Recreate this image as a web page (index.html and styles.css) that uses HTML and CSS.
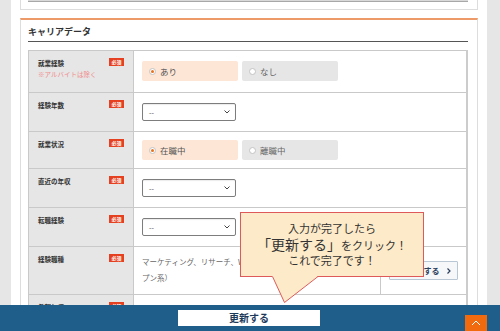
FILE: index.html
```
<!DOCTYPE html>
<html lang="ja">

<head>
    <meta charset="UTF-8">
    <title>キャリアデータ</title>
    <link rel="stylesheet" href="styles.css">
</head>

<body>
    <div class="page">
        <div class="card card-prev">
            <div class="prev-end"></div>
        </div>

        <section class="card card-career">
            <h2 class="card-title">キャリアデータ</h2>
            <table class="form-table">
                <colgroup>
                    <col class="col-label">
                    <col class="col-main">
                    <col class="col-side">
                </colgroup>
                <tr>
                    <th>
                        <div class="label">
                            <div>
                                <span class="label-text">就業経験</span>
                                <span class="note">※アルバイトは除く</span>
                            </div>
                            <span class="req">必須</span>
                        </div>
                    </th>
                    <td colspan="2" class="cell-radio cell-tall">
                        <div class="radios">
                            <label class="radio is-checked"><span class="dot"></span>あり</label>
                            <label class="radio"><span class="dot"></span>なし</label>
                        </div>
                    </td>
                </tr>
                <tr>
                    <th>
                        <div class="label"><span class="label-text">経験年数</span><span class="req">必須</span></div>
                    </th>
                    <td colspan="2">
                        <div class="select"><span>--</span><svg width="6" height="4" viewBox="0 0 6 4"><polyline points="0.5,0.5 3,3 5.5,0.5" fill="none" stroke="#444" stroke-width="1"/></svg></div>
                    </td>
                </tr>
                <tr>
                    <th>
                        <div class="label"><span class="label-text">就業状況</span><span class="req">必須</span></div>
                    </th>
                    <td colspan="2" class="cell-radio">
                        <div class="radios">
                            <label class="radio is-checked"><span class="dot"></span>在職中</label>
                            <label class="radio"><span class="dot"></span>離職中</label>
                        </div>
                    </td>
                </tr>
                <tr>
                    <th>
                        <div class="label"><span class="label-text">直近の年収</span><span class="req">必須</span></div>
                    </th>
                    <td colspan="2">
                        <div class="select"><span>--</span><svg width="6" height="4" viewBox="0 0 6 4"><polyline points="0.5,0.5 3,3 5.5,0.5" fill="none" stroke="#444" stroke-width="1"/></svg></div>
                    </td>
                </tr>
                <tr>
                    <th>
                        <div class="label"><span class="label-text">転職経験</span><span class="req">必須</span></div>
                    </th>
                    <td colspan="2">
                        <div class="select"><span>--</span><svg width="6" height="4" viewBox="0 0 6 4"><polyline points="0.5,0.5 3,3 5.5,0.5" fill="none" stroke="#444" stroke-width="1"/></svg></div>
                    </td>
                </tr>
                <tr>
                    <th>
                        <div class="label"><span class="label-text">経験職種</span><span class="req">必須</span></div>
                    </th>
                    <td class="cell-text">マーケティング、リサーチ、Webマーケティング（ネット・オー<br>プン系）</td>
                    <td class="cell-btn">
                        <button class="btn-select">選択する<svg width="4" height="6" viewBox="0 0 4 6"><polyline points="0.5,0.5 3,3 0.5,5.5" fill="none" stroke="#2b3f5c" stroke-width="1.2"/></svg></button>
                    </td>
                </tr>
                <tr>
                    <th>
                        <div class="label"><span class="label-text">希望年収</span><span class="req">必須</span></div>
                    </th>
                    <td colspan="2">
                        <div class="select is-placeholder"><span>400万円</span><svg width="6" height="4" viewBox="0 0 6 4"><polyline points="0.5,0.5 3,3 5.5,0.5" fill="none" stroke="#444" stroke-width="1"/></svg></div>
                    </td>
                </tr>
            </table>
        </section>
    </div>

    <div class="tooltip">
        <p class="tip-line1">入力が完了したら</p>
        <p class="tip-line2"><span class="tip-big">「更新する」</span>をクリック！</p>
        <p class="tip-line3">これで完了です！</p>
        <svg class="tip-tail" width="47" height="28" viewBox="0 0 47 28">
            <polygon points="0,0 12.5,26.5 46,0" fill="#fdeac8"/>
            <polyline points="0.5,0.5 12.5,26.5 46,0.5" fill="none" stroke="#de5a5a" stroke-width="1"/>
        </svg>
    </div>

    <div class="action-bar">
        <button class="btn-update">更新する</button>
        <a class="pagetop" href="#">
            <svg width="10" height="6" viewBox="0 0 10 6"><polyline points="1,5 5,1 9,5" fill="none" stroke="#fff" stroke-width="1"/></svg>
        </a>
    </div>
</body>

</html>
```

FILE: styles.css
```
html, body {
    height: 100%;
    overflow: hidden;
}

body {
    margin: 0;
    background-color: #e6e6e6;
    color: #333333;
    font-family: "Noto Sans CJK JP", "Noto Sans", sans-serif;
}

.page {
    width: 458px;
    margin-left: 11px;
    padding: 0 9px;
    min-height: 331px;
    background-color: #ffffff;
}

.card {
    border: 1px solid #dddddd;
    background-color: #ffffff;
}

.card-prev {
    border-top: none;
    height: 9px;
    padding: 0 9px 0 7px;
}

.prev-end {
    height: 1px;
    background-color: #d9d9d9;
    border-bottom: 1px solid #a8a8a8;
}

.card-career {
    margin-top: 8px;
    border-top: 2px solid #ee9a68;
    border-bottom: none;
    padding: 0 9px 0 7px;
}

.card-title {
    margin: 0;
    padding: 4px 0 2px;
    font-size: 9px;
    line-height: 15px;
    font-weight: bold;
    color: #333333;
    border-bottom: 1px solid #555555;
}

/* form table */
.form-table {
    width: 440px;
    margin-top: 8px;
    border-collapse: collapse;
    table-layout: fixed;
    border-right: 2px solid #cccccc;
}

.col-label {
    width: 105px;
}

.col-side {
    width: 87px;
}

.form-table th,
.form-table td {
    border: 1px solid #c9c9c9;
}

.form-table th {
    background-color: #e6e6e6;
    padding: 7px 9px 0 9px;
    vertical-align: top;
    text-align: left;
}

.form-table td {
    padding: 10px 8px;
    vertical-align: middle;
}

.label {
    display: flex;
    justify-content: space-between;
    align-items: flex-start;
}

.label-text {
    display: block;
    font-size: 6.5px;
    line-height: 11px;
    font-weight: bold;
    color: #333333;
}

.note {
    display: block;
    font-size: 6.5px;
    line-height: 11px;
    font-weight: normal;
    color: #f08a8a;
}

.req {
    width: 15px;
    height: 8px;
    line-height: 8px;
    background-color: #e5401f;
    color: #ffffff;
    font-size: 5px;
    font-weight: bold;
    text-align: center;
}

/* radios */
.form-table td.cell-radio {
    padding: 8px;
}

.form-table td.cell-tall {
    padding: 10px 8px 11px;
}

.radios {
    display: flex;
    gap: 4px;
}

.radio {
    display: flex;
    align-items: center;
    gap: 4px;
    width: 96px;
    height: 20px;
    padding-left: 7px;
    box-sizing: border-box;
    border-radius: 2px;
    background-color: #e6e6e6;
    font-size: 8.5px;
    color: #666666;
}

.radio.is-checked {
    background-color: #fde6d6;
    color: #555555;
}

.dot {
    width: 7px;
    height: 7px;
    box-sizing: border-box;
    border: 1px solid #c4c4c4;
    border-radius: 50%;
    background-color: #ffffff;
    position: relative;
}

.is-checked .dot::after {
    content: "";
    position: absolute;
    left: 1px;
    top: 1px;
    width: 3px;
    height: 3px;
    border-radius: 50%;
    background-color: #e8731e;
}

/* selects */
.select {
    display: flex;
    justify-content: space-between;
    align-items: center;
    width: 94px;
    height: 18px;
    padding: 0 5px 0 6px;
    box-sizing: border-box;
    border: 1px solid #7d7d7d;
    border-radius: 2px;
    box-shadow: inset 0 1px 1px rgba(0, 0, 0, 0.08);
    font-size: 7px;
    color: #444444;
}

.select.is-placeholder {
    color: #aaaaaa;
    border-color: #aaaaaa;
}

/* job type row */
.form-table td.cell-text {
    padding: 7px 8px 8px;
    font-size: 7.5px;
    line-height: 16px;
    color: #666666;
}

.form-table td.cell-btn {
    padding: 0 8px;
}

.btn-select {
    display: flex;
    align-items: center;
    justify-content: flex-end;
    gap: 7px;
    width: 69px;
    height: 19px;
    padding: 0 6px 0 0;
    border: 1px solid #b9c6d3;
    border-radius: 1px;
    background-color: #f5f7f9;
    color: #2b3f5c;
    font-family: inherit;
    font-size: 8px;
    font-weight: bold;
}

/* tooltip */
.tooltip {
    position: fixed;
    left: 240px;
    top: 212px;
    width: 184px;
    height: 65px;
    box-sizing: border-box;
    padding-top: 8px;
    border: 1px solid #de5a5a;
    background-color: #fdeac8;
    text-align: center;
    color: #333333;
}

.tooltip p {
    margin: 0;
}

.tip-line1 {
    font-size: 11px;
    line-height: 14px;
}

.tip-line2 {
    font-size: 11px;
    line-height: 18px;
}

.tip-big {
    font-size: 14px;
}

.tip-line3 {
    font-size: 11px;
    line-height: 12px;
}

.tip-tail {
    position: absolute;
    left: 31px;
    top: 63px;
}

/* bottom action bar */
.action-bar {
    position: fixed;
    left: 0;
    right: 0;
    bottom: 0;
    height: 26px;
    padding-top: 5px;
    box-sizing: border-box;
    background-color: #1f5e8a;
    display: flex;
    justify-content: center;
}

.btn-update {
    width: 142px;
    height: 16px;
    margin-left: -2px;
    padding: 0;
    border: none;
    background-color: #ffffff;
    color: #1e3a5a;
    font-family: inherit;
    font-size: 10px;
    font-weight: bold;
    line-height: 16px;
}

.pagetop {
    position: absolute;
    right: 13px;
    bottom: 0;
    width: 22px;
    height: 16px;
    background-color: #f26a0e;
    display: flex;
    justify-content: center;
    align-items: center;
}
```
